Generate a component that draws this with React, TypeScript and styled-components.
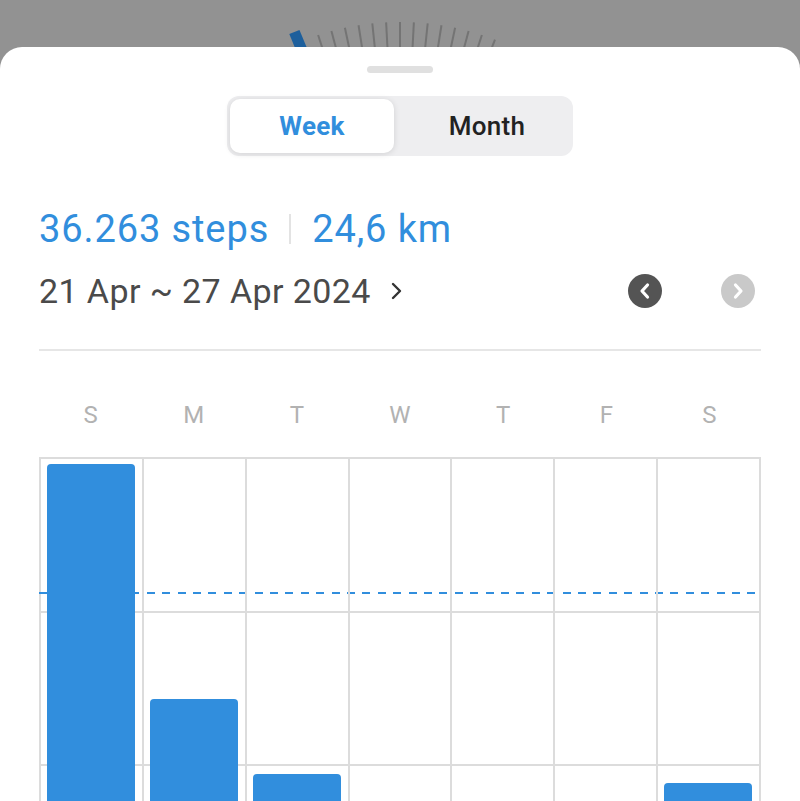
import React from 'react';
import styled, { createGlobalStyle } from 'styled-components';

const GlobalStyle = createGlobalStyle`
  html, body {
    margin: 0;
    height: 801px;
    overflow: hidden;
    background: #929292;
    font-family: Roboto, "Liberation Sans", sans-serif;
  }
`;

const BLUE = '#318edd';
const LINE = '#dcdcdc';

const Page = styled.div`
  display: flex;
  flex-direction: column;
  height: 801px;
`;

const Backdrop = styled.svg`
  display: block;
  flex-shrink: 0;
`;

const Sheet = styled.div`
  flex: 1;
  background: #fff;
  border-radius: 22px 22px 0 0;
  display: flex;
  flex-direction: column;
  align-items: stretch;
`;

const Handle = styled.div`
  align-self: center;
  width: 66px;
  height: 7px;
  border-radius: 4px;
  background: #e0e0e0;
  margin-top: 19px;
`;

const Segmented = styled.div`
  align-self: center;
  margin-top: 23px;
  width: 346px;
  height: 60px;
  box-sizing: border-box;
  padding: 3px;
  border-radius: 12px;
  background: #eeeef0;
  display: grid;
  grid-template-columns: 164px 1fr;
`;

const Segment = styled.div<{ $active?: boolean }>`
  display: flex;
  align-items: center;
  justify-content: center;
  border-radius: 10px;
  font-size: 26px;
  font-weight: ${p => (p.$active ? 700 : 500)};
  color: ${p => (p.$active ? BLUE : '#222')};
  background: ${p => (p.$active ? '#fff' : 'transparent')};
  box-shadow: ${p => (p.$active ? '0 1px 6px rgba(0,0,0,0.12)' : 'none')};
  padding-left: ${p => (p.$active ? '0' : '10px')};
  letter-spacing: 0.3px;
`;

const Content = styled.div`
  padding: 0 39px;
  display: flex;
  flex-direction: column;
`;

const Stats = styled.div`
  margin-top: 51px;
  display: flex;
  align-items: center;
  height: 44px;
  font-size: 38px;
  color: ${BLUE};
  letter-spacing: 0.9px;
`;

const Sep = styled.span`
  width: 2px;
  height: 30px;
  background: #e3e3e3;
  margin: 0 21px 0 20px;
`;

const DateRow = styled.div`
  margin-top: 20px;
  display: flex;
  align-items: center;
  height: 40px;
`;

const DateText = styled.span`
  font-size: 34px;
  color: #4a4a4a;
  letter-spacing: 0.4px;
`;

const Chevron = styled.svg`
  margin-left: 20px;
`;

const Spacer = styled.div`
  flex: 1;
`;

const NavButton = styled.div<{ $dark?: boolean }>`
  width: 34px;
  height: 34px;
  border-radius: 50%;
  background: ${p => (p.$dark ? '#545454' : '#c9c9c9')};
  display: flex;
  align-items: center;
  justify-content: center;
  margin-left: ${p => (p.$dark ? '0' : '59px')};
  margin-right: ${p => (p.$dark ? '0' : '6px')};
`;

const Divider = styled.div`
  height: 2px;
  background: #e6e6e6;
  margin-top: 38px;
`;

const Days = styled.div`
  display: grid;
  grid-template-columns: repeat(7, 1fr);
  margin-top: 49px;
  height: 30px;
  align-items: center;
`;

const Day = styled.span`
  text-align: center;
  font-size: 24px;
  color: #b2b2b2;
`;

const Chart = styled.div`
  position: relative;
  margin-top: 27px;
  height: 462px;
  display: flex;
  border-left: 2px solid ${LINE};
  background-image: repeating-linear-gradient(
    to bottom,
    ${LINE} 0,
    ${LINE} 2px,
    transparent 2px,
    transparent 153.5px
  );
`;

const Column = styled.div`
  flex: 1;
  border-right: 2px solid ${LINE};
  padding: 0 7px 0 6px;
  display: flex;
  flex-direction: column;
  justify-content: flex-end;
  position: relative;
  z-index: 1;
`;

const Bar = styled.div`
  background: ${BLUE};
  border-radius: 4px 4px 0 0;
`;

const Goal = styled.div`
  position: absolute;
  left: -2px;
  right: 0;
  top: 135px;
  height: 2px;
  background-image: repeating-linear-gradient(
    to right,
    ${BLUE} 0,
    ${BLUE} 8px,
    transparent 8px,
    transparent 15.4px
  );
`;

const days = ['S', 'M', 'T', 'W', 'T', 'F', 'S'];
const bars = [455, 220, 145, 0, 0, 0, 136];

const Dial = () => {
  const cx = 400;
  const cy = 287;
  const ticks = [];
  for (let a = -18; a <= 21; a += 3) {
    const r = (a * Math.PI) / 180;
    ticks.push(
      <line
        key={a}
        x1={cx + 265 * Math.sin(r)}
        y1={cy - 265 * Math.cos(r)}
        x2={cx + 230 * Math.sin(r)}
        y2={cy - 230 * Math.cos(r)}
        stroke="#747474"
        strokeWidth={2}
      />
    );
  }
  const b = (-22.5 * Math.PI) / 180;
  return (
    <Backdrop width="800" height="47" viewBox="0 0 800 47">
      {ticks}
      <line
        x1={cx + 276 * Math.sin(b)}
        y1={cy - 276 * Math.cos(b)}
        x2={cx + 240 * Math.sin(b)}
        y2={cy - 240 * Math.cos(b)}
        stroke="#1d5f9c"
        strokeWidth={11}
      />
    </Backdrop>
  );
};

export default function App() {
  return (
    <Page>
      <GlobalStyle />
      <Dial />
      <Sheet>
        <Handle />
        <Segmented>
          <Segment $active>Week</Segment>
          <Segment>Month</Segment>
        </Segmented>
        <Content>
          <Stats>
            <span>36.263 steps</span>
            <Sep />
            <span>24,6 km</span>
          </Stats>
          <DateRow>
            <DateText>21 Apr ~ 27 Apr 2024</DateText>
            <Chevron width="11" height="18" viewBox="0 0 11 18">
              <path d="M2 2l7 7-7 7" fill="none" stroke="#333" strokeWidth="2.4" strokeLinecap="round" strokeLinejoin="round" />
            </Chevron>
            <Spacer />
            <NavButton $dark>
              <svg width="12" height="18" viewBox="0 0 12 18">
                <path d="M8.5 3L3 9l5.5 6" fill="none" stroke="#fff" strokeWidth="3.2" strokeLinecap="round" strokeLinejoin="round" />
              </svg>
            </NavButton>
            <NavButton>
              <svg width="12" height="18" viewBox="0 0 12 18">
                <path d="M3.5 3L9 9l-5.5 6" fill="none" stroke="#fff" strokeWidth="3.2" strokeLinecap="round" strokeLinejoin="round" />
              </svg>
            </NavButton>
          </DateRow>
          <Divider />
          <Days>
            {days.map((d, i) => (
              <Day key={i}>{d}</Day>
            ))}
          </Days>
          <Chart>
            <Goal />
            {bars.map((h, i) => (
              <Column key={i}>{h > 0 && <Bar style={{ height: h }} />}</Column>
            ))}
          </Chart>
        </Content>
      </Sheet>
    </Page>
  );
}
